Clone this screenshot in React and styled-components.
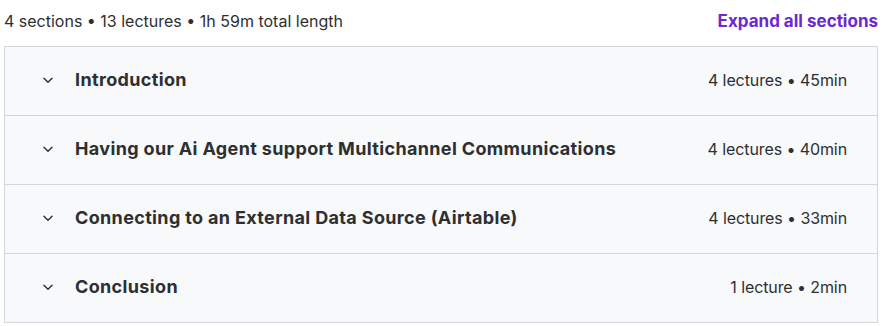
import styled, { createGlobalStyle } from "styled-components";

const GlobalStyle = createGlobalStyle`
  body {
    margin: 0;
    background: #ffffff;
    font-family: Inter, "Noto Sans", sans-serif;
  }
`;

const sections = [
  { title: "Introduction", meta: "4 lectures • 45min" },
  { title: "Having our Ai Agent support Multichannel Communications", meta: "4 lectures • 40min" },
  { title: "Connecting to an External Data Source (Airtable)", meta: "4 lectures • 33min" },
  { title: "Conclusion", meta: "1 lecture • 2min" },
];

const Chevron = () => (
  <svg width="14" height="14" viewBox="0 0 24 24" fill="none" stroke="#2d2f31" strokeWidth="2.4" strokeLinecap="round" strokeLinejoin="round">
    <path d="M5 9l7 7 7-7" />
  </svg>
);

const App = () => {
  return (
    <>
      <GlobalStyle />
      <Wrapper>
        <Header>
          <Summary>4 sections • 13 lectures • 1h 59m total length</Summary>
          <ExpandButton>Expand all sections</ExpandButton>
        </Header>
        <Accordion>
          {sections.map((s) => (
            <Row key={s.title}>
              <IconCell>
                <Chevron />
              </IconCell>
              <Title>{s.title}</Title>
              <Meta>{s.meta}</Meta>
            </Row>
          ))}
        </Accordion>
      </Wrapper>
    </>
  );
};

export default App;

const Wrapper = styled.div`
  padding: 0 4px;
  width: 874px;
`;

const Header = styled.div`
  display: flex;
  justify-content: space-between;
  align-items: center;
  height: 46px;
  padding-bottom: 4px;
  box-sizing: border-box;
`;

const Summary = styled.span`
  font-size: 16px;
  color: #2d2f31;
`;

const ExpandButton = styled.button`
  border: none;
  background: none;
  padding: 0;
  font-family: inherit;
  font-size: 17px;
  font-weight: 700;
  color: #6d28d2;
  cursor: pointer;
`;

const Accordion = styled.div`
  border: 1px solid #d1d7dc;
  border-bottom: none;
`;

const Row = styled.div`
  display: flex;
  align-items: center;
  height: 69px;
  padding: 0 30px 3px 36px;
  box-sizing: border-box;
  background: #f7f9fa;
  border-bottom: 1px solid #d1d7dc;
`;

const IconCell = styled.div`
  display: flex;
  align-items: center;
  width: 34px;
`;

const Title = styled.h3`
  flex: 1;
  margin: 0;
  font-size: 18px;
  font-weight: 700;
  letter-spacing: 0.35px;
  color: #2d2f31;
`;

const Meta = styled.span`
  font-size: 16px;
  letter-spacing: -0.1px;
  color: #2d2f31;
`;
